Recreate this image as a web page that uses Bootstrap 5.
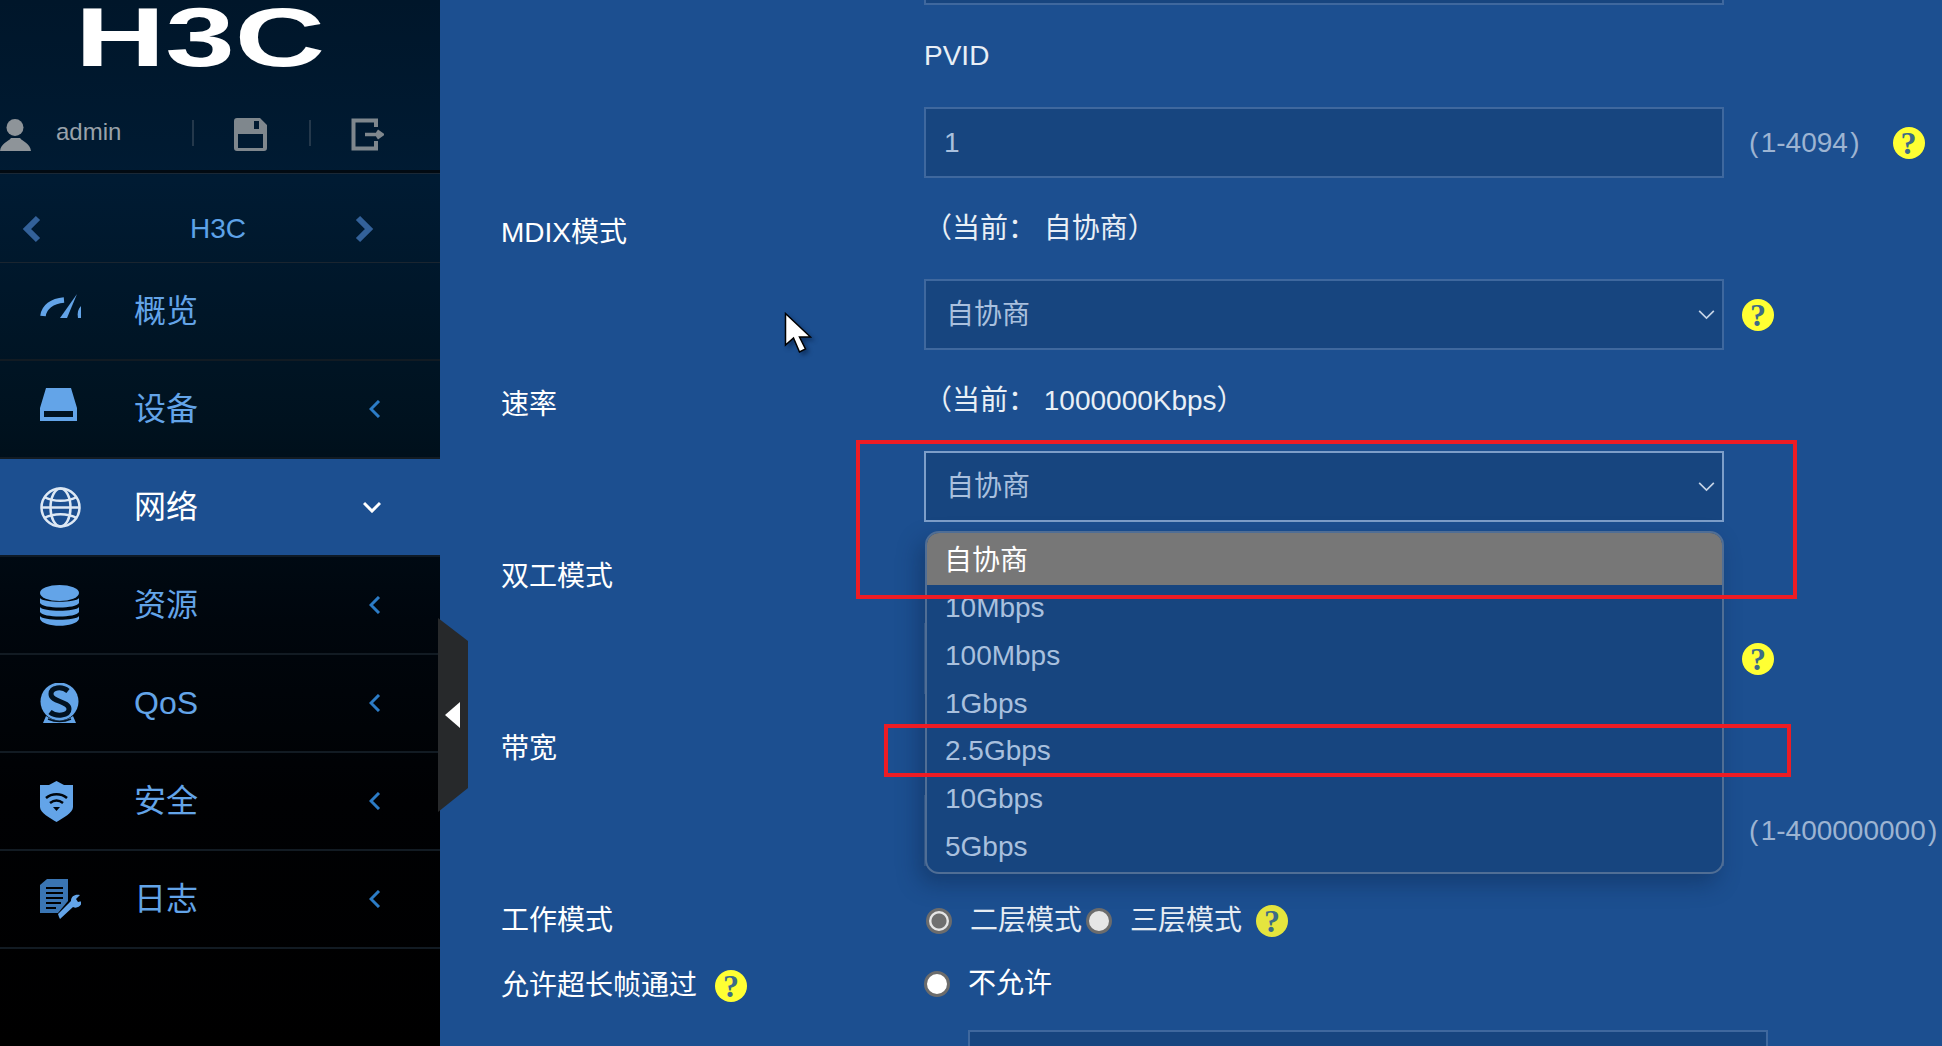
<!DOCTYPE html>
<html lang="zh">
<head>
<meta charset="utf-8">
<title>H3C</title>
<link rel="stylesheet" href="https://cdn.jsdelivr.net/npm/bootstrap@5.3.0/dist/css/bootstrap.min.css">
<style>
html,body{height:1046px;overflow:hidden;margin:0}
body{background:#1c4f90;font-family:"Liberation Sans","Noto Sans CJK SC",sans-serif;color:#fff;font-size:28px}
.shell{height:1046px;position:relative}
.side{width:440px;flex:0 0 440px;height:1046px;background:linear-gradient(180deg,#00162a 0,#001b33 180px,#00121f 420px,#00060d 620px,#000103 800px,#000 100%)}
.logo-svg{display:block;width:440px;height:72px}
.logo-svg text{font-family:"Liberation Sans",sans-serif;font-weight:700;font-size:84px;fill:#fff}
.user-row{height:101px;padding-top:46px;border-bottom:3px solid #020a12;box-shadow:0 1px 0 #1a2836}
.uname{color:#99a2aa;font-size:24px;line-height:28px;margin-left:25px;width:136px}
.vline{width:2px;height:26px;background:#24384b;margin-top:2px}
.ic-save{margin-left:40px}
.ic-vline2{margin-left:42px}
.ic-exit{margin-left:40px}
.ctx-row{height:90px;border-bottom:1px solid #1a2530;padding:22px 66px 0 22px;color:#5da2e8;font-size:28px}
.ctx-name{margin-left:40px}
.menu-item{height:98px;border-bottom:2px solid #121b23;padding:0 59px 0 40px;color:#63a4e8;font-size:32px}
.menu-item.on{background:#1c4f90;color:#fff;border-bottom-color:#0e1a26}
.m-ic{width:94px;flex:0 0 94px;display:flex;align-items:center}
.ic-up{margin-top:-9px}
.m-tx{flex:1 1 auto}
.pane{flex:1 1 auto;height:1046px;overflow:hidden;position:relative}
.canvas{margin-top:-66px;padding-left:61px}
.stub{margin-left:423px;margin-bottom:27px}
.frow{height:172px}
.flabel{width:423px;flex:0 0 423px;line-height:48px;padding-top:5px}
.fline{height:48px;line-height:48px;color:#e9eff6}
.fline.cur{line-height:50px}
.fctl{margin-top:27px}
.form-control.tfield,.form-select.tfield{width:800px;height:71px;flex:0 0 800px;border-radius:0;border:2px solid #3f689e;background-color:#17457f;color:#a9c0de;font-size:28px;padding:0 18px;box-shadow:none}
.form-select.tfield{padding-left:20px;background-image:url("data:image/svg+xml,%3Csvg xmlns='http://www.w3.org/2000/svg' viewBox='0 0 18 12'%3E%3Cpath d='M1 2l8 8 8-8' fill='none' stroke='%23c5d3e6' stroke-width='1.8'/%3E%3C/svg%3E");background-size:17px 11px;background-position:right 7px center;background-repeat:no-repeat}
.form-select.tfield.hot{border-color:#7d9ec9}
.hint{color:#9db4d2;margin-left:25px;white-space:nowrap}
.qmark{width:32px;height:32px;flex:0 0 32px;border-radius:50%;background:#ffff33;color:#3d6b87;font-family:"Liberation Serif",serif;font-weight:700;font-size:32px;line-height:32px;text-align:center;display:inline-block}
.qmark.dim{background:#e5e53e}
.q-after{margin-left:18px}
.q-hint{margin-left:33px}
.q-mode{margin-left:14px}
.moderow{height:48px;margin-top:5px}
.moderow2{height:48px;margin-top:17px}
.form-check-input.rad{width:26px;height:26px;margin:0;flex:0 0 26px;border:3px solid #6c6c6c;background-color:#e6e6e6;background-image:none;box-shadow:none}
.form-check-input.rad:checked{background-image:radial-gradient(circle,#6f6f6f 0,#6f6f6f 7px,#e6e6e6 8px)}
.form-check-input.rad.white{background-color:#fff;margin-bottom:5px}
.rad-a{margin-left:2px!important}
.rad-b{margin-left:4px!important}
.rlabel{margin-left:18px;color:#e6ecf3;line-height:48px}
.rlabel.w{color:#fff;margin-bottom:5px}
.lastfield{margin-left:467px;margin-top:20px}
.ddmenu{position:absolute;left:485px;top:531px;width:799px;height:343px;border:2px solid #506e95;border-radius:14px;background:#17457f;overflow:hidden;box-shadow:-6px 10px 22px rgba(10,30,60,.35)}
.ddmenu .list-group-item{background:transparent;border:0;color:#a9c0de;font-size:28px;height:48px;line-height:46px;padding:0 0 0 18px;border-radius:0}
.ddmenu .list-group-item.active{background:#777;color:#fff;height:52px;line-height:56px;padding-left:17px}
.redbox{position:absolute;border:4px solid #ed1c24;pointer-events:none}
.rb1{left:416px;top:440px;width:941px;height:159px}
.rb2{left:444px;top:724px;width:907px;height:53px}
.ptr{position:absolute;left:344px;top:312px;width:28px;height:42px;filter:drop-shadow(3px 3px 2px rgba(0,20,50,.45))}
.handle{position:absolute;left:438px;top:618px;width:30px;height:194px;background:#27292b;clip-path:polygon(0 0,100% 23px,100% 170px,0 100%);display:flex;align-items:center;justify-content:center}
</style>
</head>
<body>
<div class="shell d-flex">
<aside class="side">
  <svg class="logo-svg" viewBox="0 0 440 72"><text x="75" y="66" textLength="250" lengthAdjust="spacingAndGlyphs">H3C</text></svg>
  <div class="user-row d-flex align-items-start">
    <svg width="31" height="33" viewBox="0 0 31 33"><circle cx="15" cy="9.5" r="8.5" fill="#8e9499"/><path d="M0 33C1 25 8 24 11 20h9c3 4 10 5 11 13z" fill="#8e9499"/></svg>
    <div class="uname">admin</div>
    <div class="vline"></div>
    <svg class="ic-save" width="33" height="33" viewBox="0 0 33 33"><path fill="#7f878d" fill-rule="evenodd" d="M3 0H26L33 7V30a3 3 0 0 1-3 3H3a3 3 0 0 1-3-3V3a3 3 0 0 1 3-3zM4 16V30H29V16zM20 3V11H25V3z"/></svg>
    <div class="vline ic-vline2"></div>
    <svg class="ic-exit" width="33" height="33" viewBox="0 0 33 33"><path d="M25 9V2.500H2.500V30.500H25V23" fill="none" stroke="#7f878d" stroke-width="4"/><path d="M14 16.500H29M26 13l5 3.500-5 3.500" fill="none" stroke="#7f878d" stroke-width="3.500"/></svg>
  </div>
  <div class="ctx-row d-flex align-items-center justify-content-between">
    <svg width="20" height="28" viewBox="0 0 20 28"><path d="M16 3L5 14l11 11" fill="none" stroke="#336199" stroke-width="6"/></svg>
    <span class="ctx-name">H3C</span>
    <svg width="20" height="28" viewBox="0 0 20 28"><path d="M4 3l11 11L4 25" fill="none" stroke="#336199" stroke-width="6"/></svg>
  </div>
  <nav>
    <div class="menu-item d-flex align-items-center">
      <span class="m-ic"><svg class="ic-up" width="42" height="26" viewBox="0 0 42 26"><path d="M3 22C4 13 12 7 24 6" fill="none" stroke="#63a4e8" stroke-width="5.500"/><path d="M20 24L37 0 27 24z" fill="#63a4e8"/><path d="M41 12c-3 3-4 7-3 12h3z" fill="#63a4e8"/></svg></span>
      <span class="m-tx">概览</span>
    </div>
    <div class="menu-item d-flex align-items-center">
      <span class="m-ic"><svg class="ic-up" width="37" height="33" viewBox="0 0 37 33"><path fill="#63a4e8" fill-rule="evenodd" d="M6 0H31L37 20V33H0V20zM4 23V29H33V23z"/></svg></span>
      <span class="m-tx">设备</span>
      <svg width="12" height="18" viewBox="0 0 12 18"><path d="M10 1L2 9l8 8" fill="none" stroke="#2c7cc6" stroke-width="3"/></svg>
    </div>
    <div class="menu-item on d-flex align-items-center">
      <span class="m-ic"><svg width="41" height="41" viewBox="0 0 41 41" fill="none" stroke="#dde8f4" stroke-width="2.500"><circle cx="20.500" cy="20.500" r="19"/><ellipse cx="20.500" cy="20.500" rx="10" ry="19"/><path d="M4 10c10 5 23 5 33 0M4 31c10-5 23-5 33 0M1.500 20.500h38"/></svg></span>
      <span class="m-tx">网络</span>
      <svg width="18" height="12" viewBox="0 0 18 12"><path d="M1 2l8 8 8-8" fill="none" stroke="#fff" stroke-width="3"/></svg>
    </div>
    <div class="menu-item d-flex align-items-center">
      <span class="m-ic"><svg width="39" height="41" viewBox="0 0 39 41" fill="#63a4e8"><ellipse cx="19.500" cy="8" rx="19.500" ry="8"/><path d="M0 13c3 5 36 5 39 0v5c-3 6-36 6-39 0zM0 22c3 5 36 5 39 0v5c-3 6-36 6-39 0zM0 31c3 5 36 5 39 0v3c-3 9-36 9-39 0z"/></svg></span>
      <span class="m-tx">资源</span>
      <svg width="12" height="18" viewBox="0 0 12 18"><path d="M10 1L2 9l8 8" fill="none" stroke="#2c7cc6" stroke-width="3"/></svg>
    </div>
    <div class="menu-item d-flex align-items-center">
      <span class="m-ic"><svg width="39" height="41" viewBox="0 0 39 41"><circle cx="19.500" cy="18.500" r="19" fill="#63a4e8"/><path d="M28 8C22 3 11 4 11 11c0 8 18 7 18 15 0 7-13 8-19 3" fill="none" stroke="#021221" stroke-width="5"/><path d="M6 33c8 6 19 6 27 0l3 7H3z" fill="#63a4e8"/><path d="M8 36c7 3 16 3 23 0" fill="none" stroke="#021221" stroke-width="1.500"/></svg></span>
      <span class="m-tx">QoS</span>
      <svg width="12" height="18" viewBox="0 0 12 18"><path d="M10 1L2 9l8 8" fill="none" stroke="#2c7cc6" stroke-width="3"/></svg>
    </div>
    <div class="menu-item d-flex align-items-center">
      <span class="m-ic"><svg width="33" height="41" viewBox="0 0 33 41"><path d="M16.500 0L24 4h9V26c0 6-10 11-16.500 15C10 37 0 32 0 26V4h9z" fill="#63a4e8"/><path d="M6 17c6-5 15-5 21 0M10 22c4-3 9-3 13 0" fill="none" stroke="#00060c" stroke-width="2.500"/><path d="M13 26h7l-3.500 4z" fill="#00060c"/></svg></span>
      <span class="m-tx">安全</span>
      <svg width="12" height="18" viewBox="0 0 12 18"><path d="M10 1L2 9l8 8" fill="none" stroke="#2c7cc6" stroke-width="3"/></svg>
    </div>
    <div class="menu-item d-flex align-items-center">
      <span class="m-ic"><svg width="41" height="40" viewBox="0 0 41 40"><path d="M7 0H28V22L18 34H0V6z" fill="#3a75b3"/><path d="M6 9H23M6 14H23M6 19H23M6 24H21M6 29H16" stroke="#000" stroke-width="2"/><path d="M19 38l-1-3 13-13c0-5 4-7 9-6l-4 4 2 3 4-1c0 5-5 8-9 6L20 40z" fill="#63a4e8"/></svg></span>
      <span class="m-tx">日志</span>
      <svg width="12" height="18" viewBox="0 0 12 18"><path d="M10 1L2 9l8 8" fill="none" stroke="#2c7cc6" stroke-width="3"/></svg>
    </div>
  </nav>
</aside>
<main class="pane">
  <form class="canvas">
    <div class="stub"><input class="form-control tfield" type="text" aria-label="top"></div>
    <div class="frow d-flex">
      <div class="flabel"></div>
      <div>
        <div class="fline">PVID</div>
        <div class="fctl d-flex align-items-center"><input class="form-control tfield" type="text" value="1"><span class="hint">(&#8202;1-4094&#8202;)</span><span class="qmark q-hint">?</span></div>
      </div>
    </div>
    <div class="frow d-flex">
      <div class="flabel">MDIX模式</div>
      <div>
        <div class="fline cur">（当前： 自协商）</div>
        <div class="fctl d-flex align-items-center"><select class="form-select tfield"><option>自协商</option></select><span class="qmark q-after">?</span></div>
      </div>
    </div>
    <div class="frow d-flex">
      <div class="flabel">速率</div>
      <div>
        <div class="fline cur">（当前： 1000000Kbps）</div>
        <div class="fctl d-flex align-items-center"><select class="form-select tfield hot"><option>自协商</option></select></div>
      </div>
    </div>
    <div class="frow d-flex">
      <div class="flabel">双工模式</div>
      <div>
        <div class="fline"></div>
        <div class="fctl d-flex align-items-center"><input class="form-control tfield" type="text" aria-label="duplex"><span class="qmark q-after">?</span></div>
      </div>
    </div>
    <div class="frow d-flex">
      <div class="flabel">带宽</div>
      <div>
        <div class="fline"></div>
        <div class="fctl d-flex align-items-center"><input class="form-control tfield" type="text" aria-label="bandwidth"><span class="hint">(&#8202;1-400000000&#8202;)</span></div>
      </div>
    </div>
    <div class="moderow d-flex align-items-center">
      <div class="flabel pt-0">工作模式</div>
      <input class="form-check-input rad rad-a" type="radio" name="m" checked aria-label="二层模式"><span class="rlabel">二层模式</span>
      <input class="form-check-input rad rad-b" type="radio" name="m" aria-label="三层模式"><span class="rlabel">三层模式</span>
      <span class="qmark dim q-mode">?</span>
    </div>
    <div class="moderow2 d-flex align-items-center">
      <div class="flabel pt-0 d-flex align-items-center">允许超长帧通过<span class="qmark q-after">?</span></div>
      <input class="form-check-input rad white" type="radio" name="j" aria-label="不允许"><span class="rlabel w">不允许</span>
    </div>
    <div class="lastfield"><input class="form-control tfield" type="text" aria-label="last"></div>
  </form>
  <ul class="ddmenu list-group">
    <li class="list-group-item active">自协商</li>
    <li class="list-group-item">10Mbps</li>
    <li class="list-group-item">100Mbps</li>
    <li class="list-group-item">1Gbps</li>
    <li class="list-group-item">2.5Gbps</li>
    <li class="list-group-item">10Gbps</li>
    <li class="list-group-item">5Gbps</li>
  </ul>
  <div class="redbox rb1"></div>
  <div class="redbox rb2"></div>
  <svg class="ptr" viewBox="0 0 28 42"><path d="M1.500 1.500V33l8-7 6 14 6-3-6-12h11z" fill="#fff" stroke="#000" stroke-width="1.500"/></svg>
</main>
<div class="handle"><svg width="16" height="26" viewBox="0 0 16 26"><path d="M15 0V26L0 13z" fill="#fff"/></svg></div>
</div>
</body>
</html>
